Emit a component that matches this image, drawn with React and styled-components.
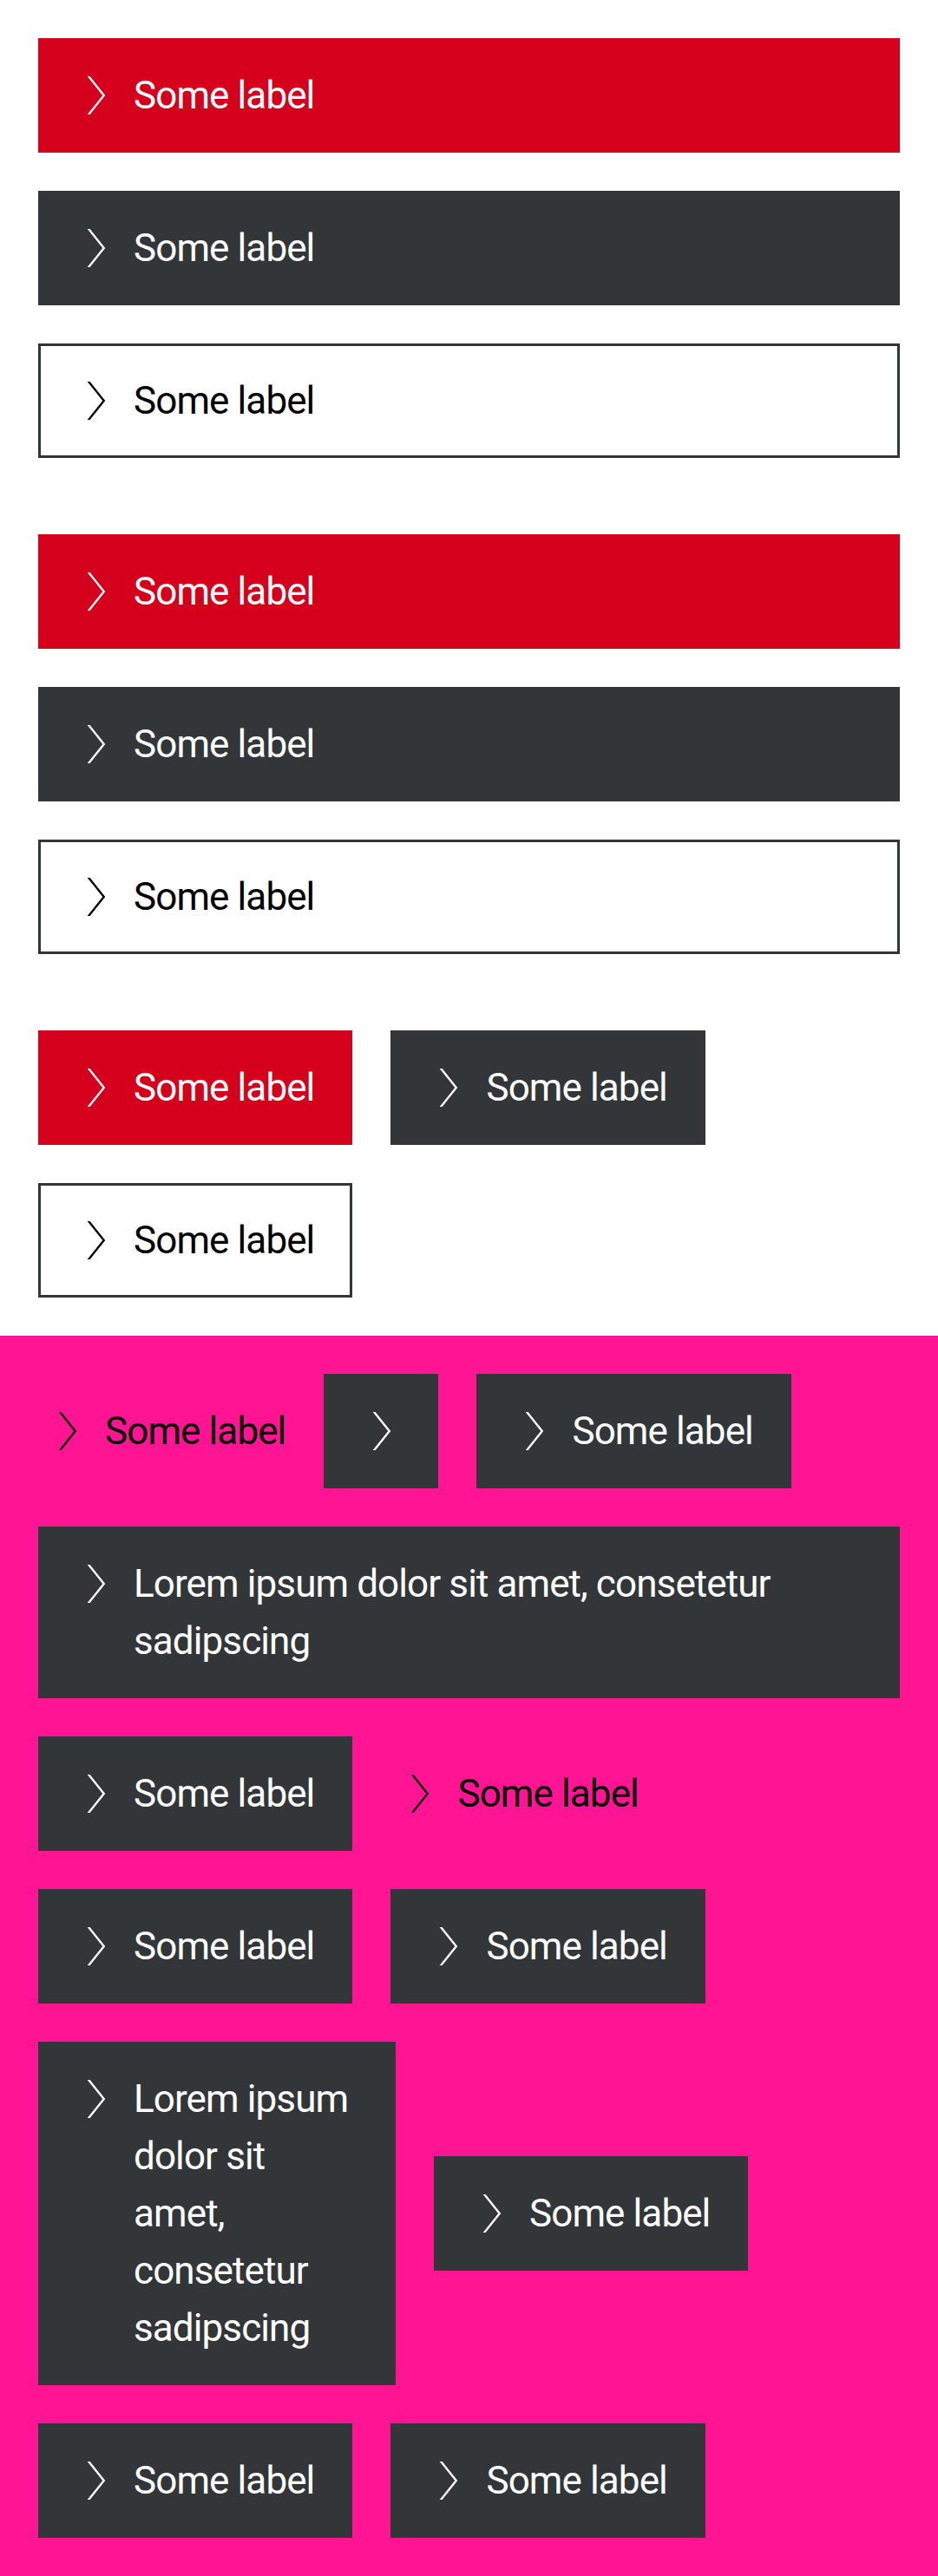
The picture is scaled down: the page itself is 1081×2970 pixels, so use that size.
import React from 'react';
import styled, { createGlobalStyle, css } from 'styled-components';

const GlobalStyle = createGlobalStyle`
  html, body {
    margin: 0;
    padding: 0;
    background: #fff;
  }
  body {
    font-family: Roboto, "Liberation Sans", sans-serif;
  }
`;

const variants = {
  primary: { bg: '#d5001c', border: '#d5001c', color: '#fff' },
  secondary: { bg: '#323639', border: '#323639', color: '#fff' },
  tertiary: { bg: 'transparent', border: '#323639', color: '#000' },
};

const Section = styled.section`
  display: flex;
  flex-direction: column;
  gap: ${p => p.$gap}px;
  padding: 44px;
  background: ${p => p.$surface};
`;

const Group = styled.div`
  display: flex;
  flex-direction: column;
  gap: 44px;
`;

const Row = styled.div`
  display: flex;
  align-items: center;
  gap: 44px;
`;

const textStyle = css`
  font-family: Roboto, "Liberation Sans", sans-serif;
  font-size: 44px;
  font-weight: 400;
  line-height: 66px;
  letter-spacing: -0.9px;
  text-decoration: none;
`;

const LinkButton = styled.a`
  ${textStyle}
  display: flex;
  align-items: flex-start;
  gap: 11px;
  box-sizing: border-box;
  flex-shrink: 0;
  padding: ${p => (p.$iconOnly ? '30px' : '30px 41px 30px 30px')};
  width: ${p => (p.$width ? `${p.$width}px` : 'auto')};
  border: 3px solid ${p => variants[p.$variant].border};
  background: ${p => variants[p.$variant].bg};
  color: ${p => variants[p.$variant].color};
`;

const PureLink = styled.a`
  ${textStyle}
  display: flex;
  align-items: flex-start;
  gap: 11px;
  flex-shrink: 0;
  color: #000;
`;

const Label = styled.span`
  display: block;
`;

const IconBox = styled.svg`
  display: block;
  width: 66px;
  height: 66px;
  flex-shrink: 0;
`;

const Chevron = () => (
  <IconBox viewBox="0 0 24 24" aria-hidden="true">
    <polygon points="8.6,4 9.7,4 16.1,12 9.7,20 8.6,20 15,12" fill="currentColor" />
  </IconBox>
);

const Btn = ({ variant = 'secondary', children, width }) => (
  <LinkButton href="#" $variant={variant} $width={width} $iconOnly={!children}>
    <Chevron />
    {children && <Label>{children}</Label>}
  </LinkButton>
);

const Pure = ({ children }) => (
  <PureLink href="#">
    <Chevron />
    <Label>{children}</Label>
  </PureLink>
);

const LOREM = 'Lorem ipsum dolor sit amet, consetetur sadipscing';

export default function App() {
  return (
    <>
      <GlobalStyle />
      <Section $surface="#fff" $gap={88}>
        <Group>
          <Btn variant="primary">Some label</Btn>
          <Btn variant="secondary">Some label</Btn>
          <Btn variant="tertiary">Some label</Btn>
        </Group>
        <Group>
          <Btn variant="primary">Some label</Btn>
          <Btn variant="secondary">Some label</Btn>
          <Btn variant="tertiary">Some label</Btn>
        </Group>
        <Group>
          <Row>
            <Btn variant="primary">Some label</Btn>
            <Btn variant="secondary">Some label</Btn>
          </Row>
          <Row>
            <Btn variant="tertiary">Some label</Btn>
          </Row>
        </Group>
      </Section>
      <Section $surface="#ff1493" $gap={44}>
        <Row>
          <Pure>Some label</Pure>
          <Btn />
          <Btn>Some label</Btn>
        </Row>
        <Btn>{LOREM}</Btn>
        <Row>
          <Btn>Some label</Btn>
          <Pure>Some label</Pure>
        </Row>
        <Row>
          <Btn>Some label</Btn>
          <Btn>Some label</Btn>
        </Row>
        <Row>
          <Btn width={412}>{LOREM}</Btn>
          <Btn>Some label</Btn>
        </Row>
        <Row>
          <Btn>Some label</Btn>
          <Btn>Some label</Btn>
        </Row>
      </Section>
    </>
  );
}
